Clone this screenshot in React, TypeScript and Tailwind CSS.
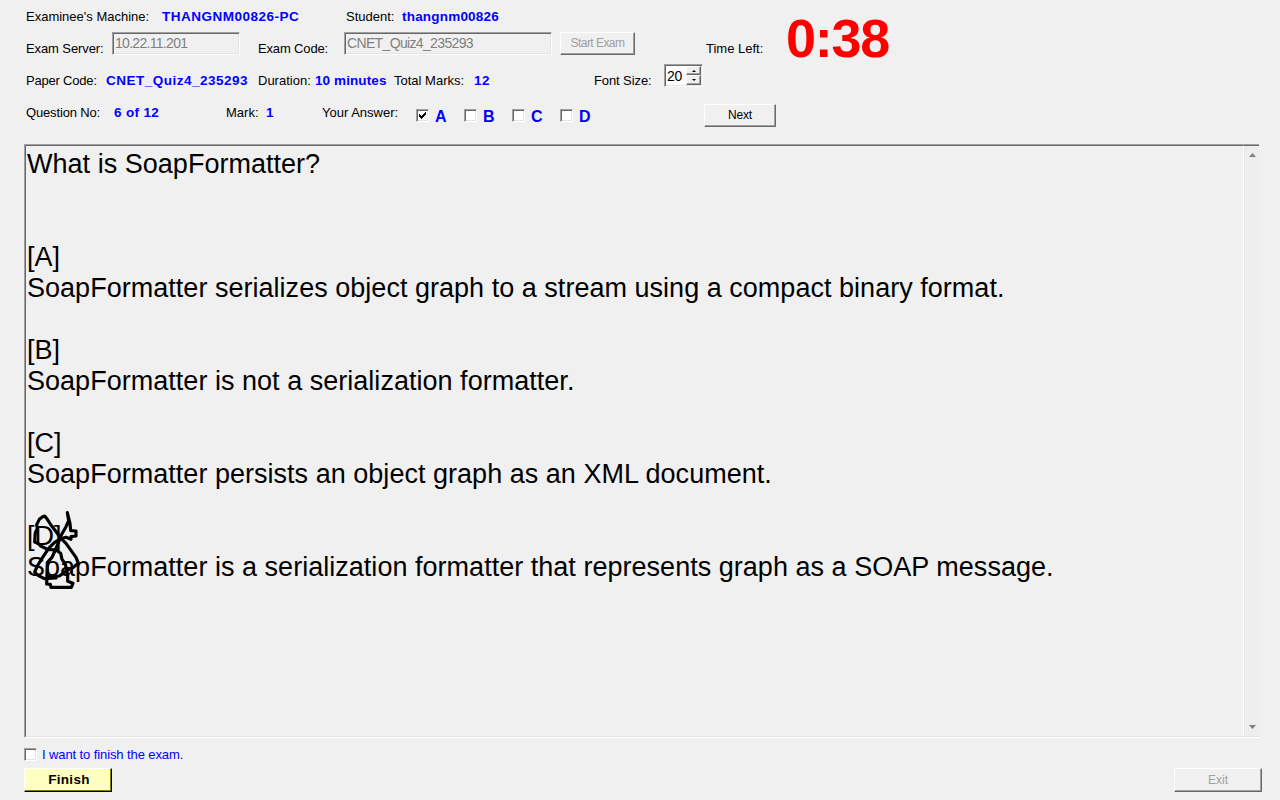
import type { ReactNode } from "react";

const sunken =
  "border border-t-[#a0a0a0] border-l-[#a0a0a0] border-b-white border-r-white shadow-[inset_1px_1px_0_#696969,inset_-1px_-1px_0_#e3e3e3]";

const raised =
  "border border-t-white border-l-white border-r-[#696969] border-b-[#696969] shadow-[inset_-1px_-1px_0_#a0a0a0]";

function Label({ className = "", children }: { className?: string; children: ReactNode }) {
  return <span className={`shrink-0 pt-0.5 whitespace-pre ${className}`}>{children}</span>;
}

function Value({ className = "", children }: { className?: string; children: ReactNode }) {
  return (
    <span className={`shrink-0 pt-px text-[13.5px] leading-4 font-bold whitespace-pre text-[#0000ff] ${className}`}>
      {children}
    </span>
  );
}

function Box({ checked = false }: { checked?: boolean }) {
  return (
    <span className={`flex h-[13px] w-[13px] shrink-0 bg-white pt-px pl-px ${sunken}`}>
      {checked && (
        <svg className="h-[9px] w-[9px]" viewBox="0 0 9 9" shapeRendering="crispEdges">
          <path d="M1 3h1v3h-1zM2 4h1v3h-1zM3 5h1v3h-1zM4 4h1v3h-1zM5 3h1v3h-1zM6 2h1v3h-1zM7 1h1v3h-1z" fill="#000" />
        </svg>
      )}
    </span>
  );
}

function Choice({ letter, checked }: { letter: string; checked?: boolean }) {
  return (
    <label className="flex w-12 shrink-0 items-center">
      <Box checked={checked} />
      <span className="ml-1.5 pt-0.5 text-[16px] leading-4 font-bold text-[#0000ff]">{letter}</span>
    </label>
  );
}

function Button({ className, children }: { className: string; children: ReactNode }) {
  return <button className={`flex shrink-0 items-center justify-center border ${className}`}>{children}</button>;
}

function Arrow({ up = false, className }: { up?: boolean; className: string }) {
  return (
    <svg className={className} viewBox="0 0 8 4" preserveAspectRatio="none">
      <path d={up ? "M0 4L4 0L8 4z" : "M0 0L4 4L8 0z"} fill="currentColor" />
    </svg>
  );
}

const lines = [
  "What is SoapFormatter?",
  "",
  "",
  "[A]",
  "SoapFormatter serializes object graph to a stream using a compact binary format.",
  "",
  "[B]",
  "SoapFormatter is not a serialization formatter.",
  "",
  "[C]",
  "SoapFormatter persists an object graph as an XML document.",
  "",
  "[D]",
  "SoapFormatter is a serialization formatter that represents graph as a SOAP message.",
];

export default function App() {
  return (
    <div className="flex h-[800px] w-[1280px] flex-col overflow-hidden bg-[#f0f0f0] font-['Liberation_Sans',Arial,sans-serif] text-[13px] leading-4 text-black">
      <header className="flex h-36 shrink-0 flex-col pl-[26px]">
        <div className="flex h-8 items-center">
          <Label className="w-[136px]">Examinee's Machine:</Label>
          <Value className="w-[184px] tracking-[0.5px]">THANGNM00826-PC</Value>
          <Label className="w-14">Student:</Label>
          <Value className="tracking-[0.2px]">thangnm00826</Value>
        </div>
        <div className="flex h-8 items-center">
          <Label className="w-[86px] tracking-[-0.1px]">Exam Server:</Label>
          <div className={`mb-[9px] h-[23px] w-32 shrink-0 pl-0.5 text-[14px] leading-[21px] text-[#808080] ${sunken}`}>
            <span className="tracking-[-0.7px]">10.22.11.201</span>
          </div>
          <Label className="ml-[18px] w-[86px] tracking-[-0.15px]">Exam Code:</Label>
          <div className={`mb-[9px] h-[23px] w-52 shrink-0 pl-0.5 text-[14px] leading-[21px] text-[#808080] ${sunken}`}>
            <span className="tracking-[-0.65px]">CNET_Quiz4_235293</span>
          </div>
          <Button className={`mb-[9px] ml-2 h-[23px] w-[75px] pb-px text-[12px] tracking-[-0.55px] text-[#a0a0a0] ${raised}`}>
            Start Exam
          </Button>
          <Label className="ml-[71px] w-20">Time Left:</Label>
          <span className="mb-[20px] shrink-0 text-[54px] leading-[60px] font-bold tracking-[-1.3px] text-[#ff0000]">0:38</span>
        </div>
        <div className="flex h-8 items-center">
          <Label className="w-20 tracking-[-0.2px]">Paper Code:</Label>
          <Value className="w-[152px] tracking-[0.5px]">CNET_Quiz4_235293</Value>
          <Label className="w-[57px]">Duration:</Label>
          <Value className="w-[79px] tracking-[0.1px]">10 minutes</Value>
          <Label className="w-20">Total Marks:</Label>
          <Value className="w-[120px] tracking-[0.4px]">12</Value>
          <Label className="w-[70px] tracking-[-0.1px]">Font Size:</Label>
          <div className={`mb-[9px] flex h-[23px] w-[39px] shrink-0 bg-white pt-px pl-px ${sunken}`}>
            <span className="w-5 pl-px text-[14px] leading-[21px] tracking-[-0.4px]">20</span>
            <div className="flex w-[15px] flex-col">
              <Button className={`h-[9px] w-[15px] bg-[#f0f0f0] ${raised}`}>
                <Arrow up className="h-[2px] w-[4px]" />
              </Button>
              <Button className={`h-[10px] w-[15px] bg-[#f0f0f0] ${raised}`}>
                <Arrow className="h-[2px] w-[4px]" />
              </Button>
            </div>
          </div>
        </div>
        <div className="flex h-8 items-center">
          <Label className="w-[88px] tracking-[-0.15px]">Question No:</Label>
          <Value className="w-28 tracking-[0.35px]">6 of 12</Value>
          <Label className="w-10">Mark:</Label>
          <Value className="w-14">1</Value>
          <Label className="w-[94px]">Your Answer:</Label>
          <div className="mt-[7px] flex w-72 shrink-0">
            <Choice letter="A" checked />
            <Choice letter="B" />
            <Choice letter="C" />
            <Choice letter="D" />
          </div>
          <Button className={`mt-[7px] h-[23px] w-[72px] pb-px text-[12px] tracking-[-0.2px] ${raised}`}>Next</Button>
        </div>
      </header>

      <main className="relative ml-6 flex h-[594px] w-[1235px] shrink-0 border-t border-b border-l border-t-[#a0a0a0] border-b-white border-l-[#a0a0a0]">
        <div className="flex-1 border-t border-b border-l border-t-[#696969] border-b-[#e3e3e3] border-l-[#696969] pl-px">
          <div className="pt-[3px] text-[27px] leading-[31px] tracking-[0.025px]">
            {lines.map((line, i) => (
              <p key={i} className="h-[31px] whitespace-pre">
                {line}
              </p>
            ))}
          </div>
        </div>
        <div className="flex w-4 flex-col items-center justify-between border-t border-b border-l border-t-[#696969] border-b-[#e3e3e3] border-l-white bg-[#eeeeee] pt-[7px] pb-[7px] pl-px text-[#808080] shadow-[inset_1px_0_0_#e6e6e6]">
          <Arrow up className="h-1 w-[7px]" />
          <Arrow className="h-1 w-[7px]" />
        </div>
        <svg
          className="absolute top-[355px] left-[-9px] h-[100px] w-[120px]"
          viewBox="0 0 360 300"
          fill="none"
          stroke="#000"
          strokeWidth="9.5"
          strokeLinecap="round"
          strokeLinejoin="round"
        >
          <path d="M132 112L118 92L105 75L94 58L86 48L80 50L70 58L62 74L64 85L58 98L57 110L56 126L66 130L74 138L95 148L120 150L134 160L138 178L148 192L152 212L172 202L187 190L180 172L150 130Z" />
          <path d="M132 112L150 80L158 62L154 38L162 70L164 92L180 93L180 108L165 110L165 118L150 112L134 116L115 128L98 145L80 172L64 198L56 216L66 226L85 236L120 234" />
          <path d="M132 116L118 150L108 172L94 188L92 252L103 253L105 262L166 262L171 250L155 244L155 225L152 212L130 228L95 230" />
        </svg>
      </main>

      <footer className="flex flex-col pl-6">
        <label className="mt-2 flex h-4 items-center">
          <Box />
          <span className="ml-[5px] pt-0.5 tracking-[-0.1px] text-[#0000ff]">I want to finish the exam.</span>
        </label>
        <div className="mt-[6px] flex justify-between pr-[18px]">
          <Button className="h-6 w-[88px] border-t-white border-r-black border-b-black border-l-white bg-[#ffffc0] pl-0.5 text-[13.5px] font-bold tracking-[0.3px] shadow-[inset_-1px_-1px_0_#808000]">
            Finish
          </Button>
          <Button className={`h-6 w-[88px] text-[12px] text-[#a0a0a0] ${raised}`}>Exit</Button>
        </div>
      </footer>
    </div>
  );
}
